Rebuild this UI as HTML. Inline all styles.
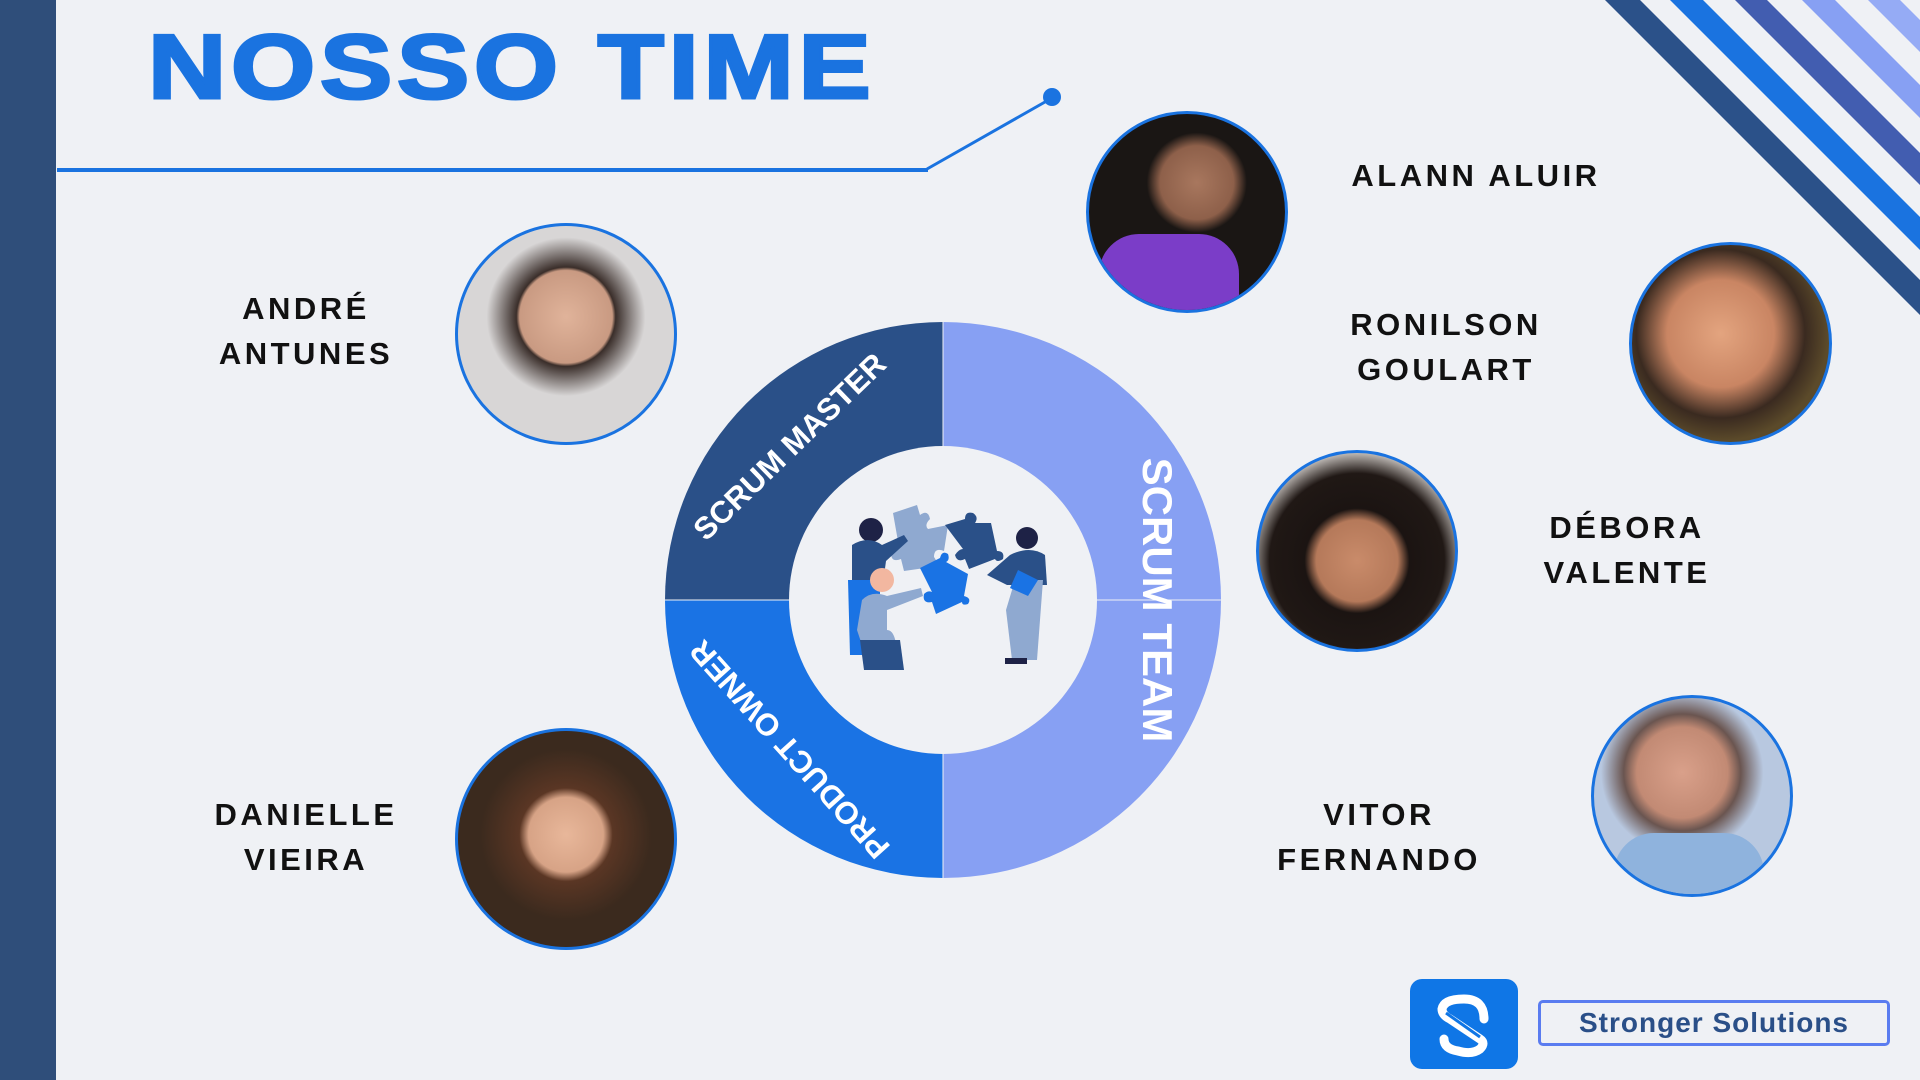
<!DOCTYPE html>
<html><head><meta charset="utf-8"><style>
html,body{margin:0;padding:0}
body{width:1920px;height:1080px;background:#eff1f5;position:relative;overflow:hidden;font-family:"Liberation Sans",sans-serif}
.bar{position:absolute;left:0;top:0;width:56px;height:1080px;background:#2f4e7a}
.title{position:absolute;left:148px;top:8px;font-size:91px;font-weight:bold;color:#1a73e0;letter-spacing:4px;transform:scaleX(1.19);transform-origin:left;line-height:120px;-webkit-text-stroke:3px #1a73e0;white-space:nowrap}
.name{position:absolute;font-weight:bold;font-size:31px;letter-spacing:3.5px;color:#111;text-align:center;line-height:45px;transform:translateX(-50%)}
.ph{position:absolute;border-radius:50%;border:3px solid #1a73e0;box-sizing:border-box;overflow:hidden}
.rt{position:absolute;color:#fff;font-weight:bold;white-space:nowrap;transform-origin:center}
</style></head><body>
<div class="bar"></div>
<div class="title">NOSSO TIME</div>
<svg width="1920" height="1080" style="position:absolute;left:0;top:0">
<line x1="57" y1="170" x2="928" y2="170" stroke="#1a73e0" stroke-width="4"/>
<line x1="927" y1="169" x2="1052" y2="98" stroke="#1a73e0" stroke-width="3"/>
<circle cx="1052" cy="97" r="9" fill="#1a73e0"/>
<g>
<polygon points="1605,0 1640,0 2240,600 2205,600" fill="#2b5189"/>
<polygon points="1670,0 1703,0 2303,600 2270,600" fill="#1a73e0"/>
<polygon points="1735,0 1767,0 2367,600 2335,600" fill="#425db0"/>
<polygon points="1802,0 1835,0 2435,600 2402,600" fill="#87a0f3"/>
<polygon points="1868,0 1900,0 2500,600 2468,600" fill="#95abf5"/>
</g>
<path d="M943,600 L943,322 A278,278 0 0,0 665,600 Z" fill="#2a5088"/>
<path d="M943,600 L665,600 A278,278 0 0,0 943,878 Z" fill="#1a73e4"/>
<path d="M943,600 L943,878 A278,278 0 0,0 943,322 Z" fill="#87a0f3"/>
<line x1="943" y1="322" x2="943" y2="878" stroke="#eff1f5" stroke-width="1"/>
<line x1="665" y1="600" x2="1221" y2="600" stroke="#eff1f5" stroke-width="1"/>
<circle cx="943" cy="600" r="154" fill="#eff1f5"/>
<g>
<path d="M893,513 l24,-8 l3,10 q8,-6 10,4 q-6,6 -2,10 l20,-4 l-4,26 q-10,-4 -10,6 q6,8 -2,10 l-28,4 l-3,-12 q-10,4 -10,-6 q4,-8 8,-6 z" fill="#8fa9d0"/>
<path d="M945,525 l20,-6 q0,-8 8,-6 q6,4 2,10 l16,0 l6,28 q8,0 6,8 q-6,4 -8,0 l-26,10 l-4,-10 q-8,4 -10,-4 q4,-6 8,-6 z" fill="#2a5088"/>
<path d="M920,568 l20,-10 q2,-8 8,-4 q2,6 -2,8 l22,12 l-4,22 q8,2 4,8 q-6,2 -6,-2 l-26,12 l-4,-12 q-10,2 -8,-8 q4,-4 8,-2 z" fill="#1a73e4"/>
<circle cx="871" cy="530" r="12" fill="#1e2246"/>
<path d="M852,545 q16,-10 30,0 l22,-10 l4,6 l-22,20 l-4,30 l-30,0 z" fill="#2a5088"/>
<path d="M848,580 l32,0 l0,75 l-30,0 z" fill="#1a73e4"/>
<circle cx="882" cy="580" r="12" fill="#f2b7a0"/>
<path d="M862,600 q10,-10 25,-4 l34,-8 l2,8 l-36,14 l0,20 q10,0 10,30 l-30,0 l-10,-30 z" fill="#8fa9d0"/>
<path d="M860,640 l40,0 l4,30 l-40,0 z" fill="#2a5088"/>
<circle cx="1027" cy="538" r="11" fill="#1e2246"/>
<path d="M1010,555 q20,-10 35,0 l2,30 l-40,0 l-20,-10 z" fill="#2a5088"/>
<path d="M1015,580 l28,0 l-6,80 l-25,0 l-6,-50 z" fill="#8fa9d0"/>
<path d="M1018,570 l20,10 l-10,16 l-18,-8 z" fill="#1a73e4"/>
<rect x="1005" y="658" width="22" height="6" fill="#1e2246"/>
</g>
</svg>
<div class="rt" style="left:790px;top:447px;font-size:31px;transform:translate(-50%,-50%) rotate(-44deg)">SCRUM MASTER</div>
<div class="rt" style="left:1157px;top:600px;font-size:42px;transform:translate(-50%,-50%) rotate(90deg)">SCRUM TEAM</div>
<div class="rt" style="left:790px;top:749px;font-size:31px;transform:translate(-50%,-50%) rotate(-132deg)">PRODUCT OWNER</div>

<div class="ph" style="left:455px;top:223px;width:222px;height:222px;background:radial-gradient(circle at 50% 42%,#e0b39a 0,#c99a82 28%,#3a2e2a 30%,#d8d6d6 48%)"></div>
<div class="ph" style="left:455px;top:728px;width:222px;height:222px;background:radial-gradient(circle at 50% 48%,#e8b79a 0,#d7a386 24%,#5a3624 30%,#3b2a1e 55%)"></div>
<div class="ph" style="left:1086px;top:111px;width:202px;height:202px;background:radial-gradient(circle at 55% 35%,#a8775e 0,#8e604a 22%,#1a1614 30%),#111"><div style="position:absolute;left:10px;top:120px;width:140px;height:90px;background:#7b3dc8;border-radius:40px 40px 0 0"></div></div>
<div class="ph" style="left:1629px;top:242px;width:203px;height:203px;background:radial-gradient(circle at 45% 45%,#e3a47f 0,#c98563 35%,#3a2a20 55%,#5b4a2a 70%)"></div>
<div class="ph" style="left:1256px;top:450px;width:202px;height:202px;background:radial-gradient(circle at 50% 55%,#c98b6a 0,#b5795a 28%,#1b1412 36%,#201815 60%,#c9c4c0 75%)"></div>
<div class="ph" style="left:1591px;top:695px;width:202px;height:202px;background:radial-gradient(circle at 45% 38%,#d9a08a 0,#c28a74 28%,#6a5550 36%,#b8c8e0 50%)"><div style="position:absolute;left:20px;top:135px;width:150px;height:80px;background:#8fb3dd;border-radius:40px 40px 0 0"></div></div>

<div class="name" style="left:306px;top:286px">ANDRÉ<br>ANTUNES</div>
<div class="name" style="left:306px;top:792px">DANIELLE<br>VIEIRA</div>
<div class="name" style="left:1476px;top:153px">ALANN ALUIR</div>
<div class="name" style="left:1446px;top:302px">RONILSON<br>GOULART</div>
<div class="name" style="left:1627px;top:505px">DÉBORA<br>VALENTE</div>
<div class="name" style="left:1379px;top:792px">VITOR<br>FERNANDO</div>

<div style="position:absolute;left:1410px;top:979px;width:108px;height:90px;background:#0f76e6;border-radius:12px"></div>
<svg width="108" height="90" style="position:absolute;left:1410px;top:979px" viewBox="0 0 108 90">
<path d="M74,40 q0,-20 -20,-20 q-20,0 -22,10 q0,6 8,10 l30,20 q6,4 0,10 q-8,6 -22,2 q-14,-2 -14,-12" fill="none" stroke="#fff" stroke-width="9" stroke-linecap="round"/>
<path d="M36,34 l34,24" stroke="#0f76e6" stroke-width="3"/>
</svg>
<div style="position:absolute;left:1538px;top:1000px;width:352px;height:46px;border:3px solid #5a7cf0;border-radius:5px;box-sizing:border-box;color:#2a4f88;font-weight:bold;font-size:28px;line-height:40px;text-align:center;letter-spacing:1px">Stronger Solutions</div>
</body></html>
